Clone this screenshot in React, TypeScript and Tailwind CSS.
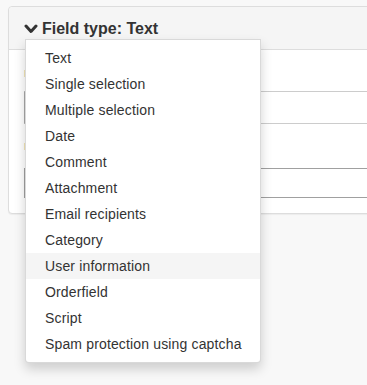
import React from "react";

const fieldTypes = [
  "Text",
  "Single selection",
  "Multiple selection",
  "Date",
  "Comment",
  "Attachment",
  "Email recipients",
  "Category",
  "User information",
  "Orderfield",
  "Script",
  "Spam protection using captcha",
];

export default function App() {
  const active = "User information";

  return (
    <div
      className="relative w-[367px] h-[385px] overflow-hidden bg-[#f8f8f8] pt-[6px] pl-2"
      style={{ fontFamily: '"Liberation Sans", Arial, sans-serif' }}
    >
      {/* panel */}
      <div className="w-[380px] rounded-[4px] border border-[#dddddd] bg-white shadow-[0_1px_1px_rgba(0,0,0,0.05)]">
        <div className="flex h-[43px] items-center gap-[4px] rounded-t-[4px] border-b border-[#dddddd] bg-[#f5f5f5] pl-[15px] pt-[1px]">
          <svg width="14" height="14" viewBox="0 0 14 14" className="text-[#333]">
            <polyline
              points="2,4 7,9.5 12,4"
              fill="none"
              stroke="currentColor"
              strokeWidth="3"
              strokeLinecap="round"
              strokeLinejoin="round"
            />
          </svg>
          <span className="text-[16px] font-bold text-[#333]">Field type: Text</span>
        </div>

        {/* body (mostly hidden behind the menu) */}
        <div className="h-[163px] pl-[15px] pt-[20px]">
          <div className="h-[7px] w-[3px] bg-[#f3e6b8]" />
          <div className="mt-[14px] h-[33px] border border-[#cccccc] border-l-[#a8a8a8]" />
          <div className="mt-[19px] h-[7px] w-[3px] bg-[#f3e6b8]" />
          <div className="mt-[18px] h-[30px] border border-[#a0a0a0]" />
        </div>
      </div>

      {/* dropdown */}
      <ul className="absolute left-[25px] top-[39px] w-[236px] rounded-b-[4px] border border-[rgba(0,0,0,0.15)] bg-white py-[5px] shadow-[0_6px_12px_rgba(0,0,0,0.175)]">
        {fieldTypes.map((t) => (
          <li
            key={t}
            className={
              "h-[26px] pl-[19px] text-[14px] leading-[27px] tracking-[0.15px] text-[#333] " +
              (t === active ? "bg-[#f5f5f5]" : "")
            }
          >
            {t}
          </li>
        ))}
      </ul>
    </div>
  );
}
